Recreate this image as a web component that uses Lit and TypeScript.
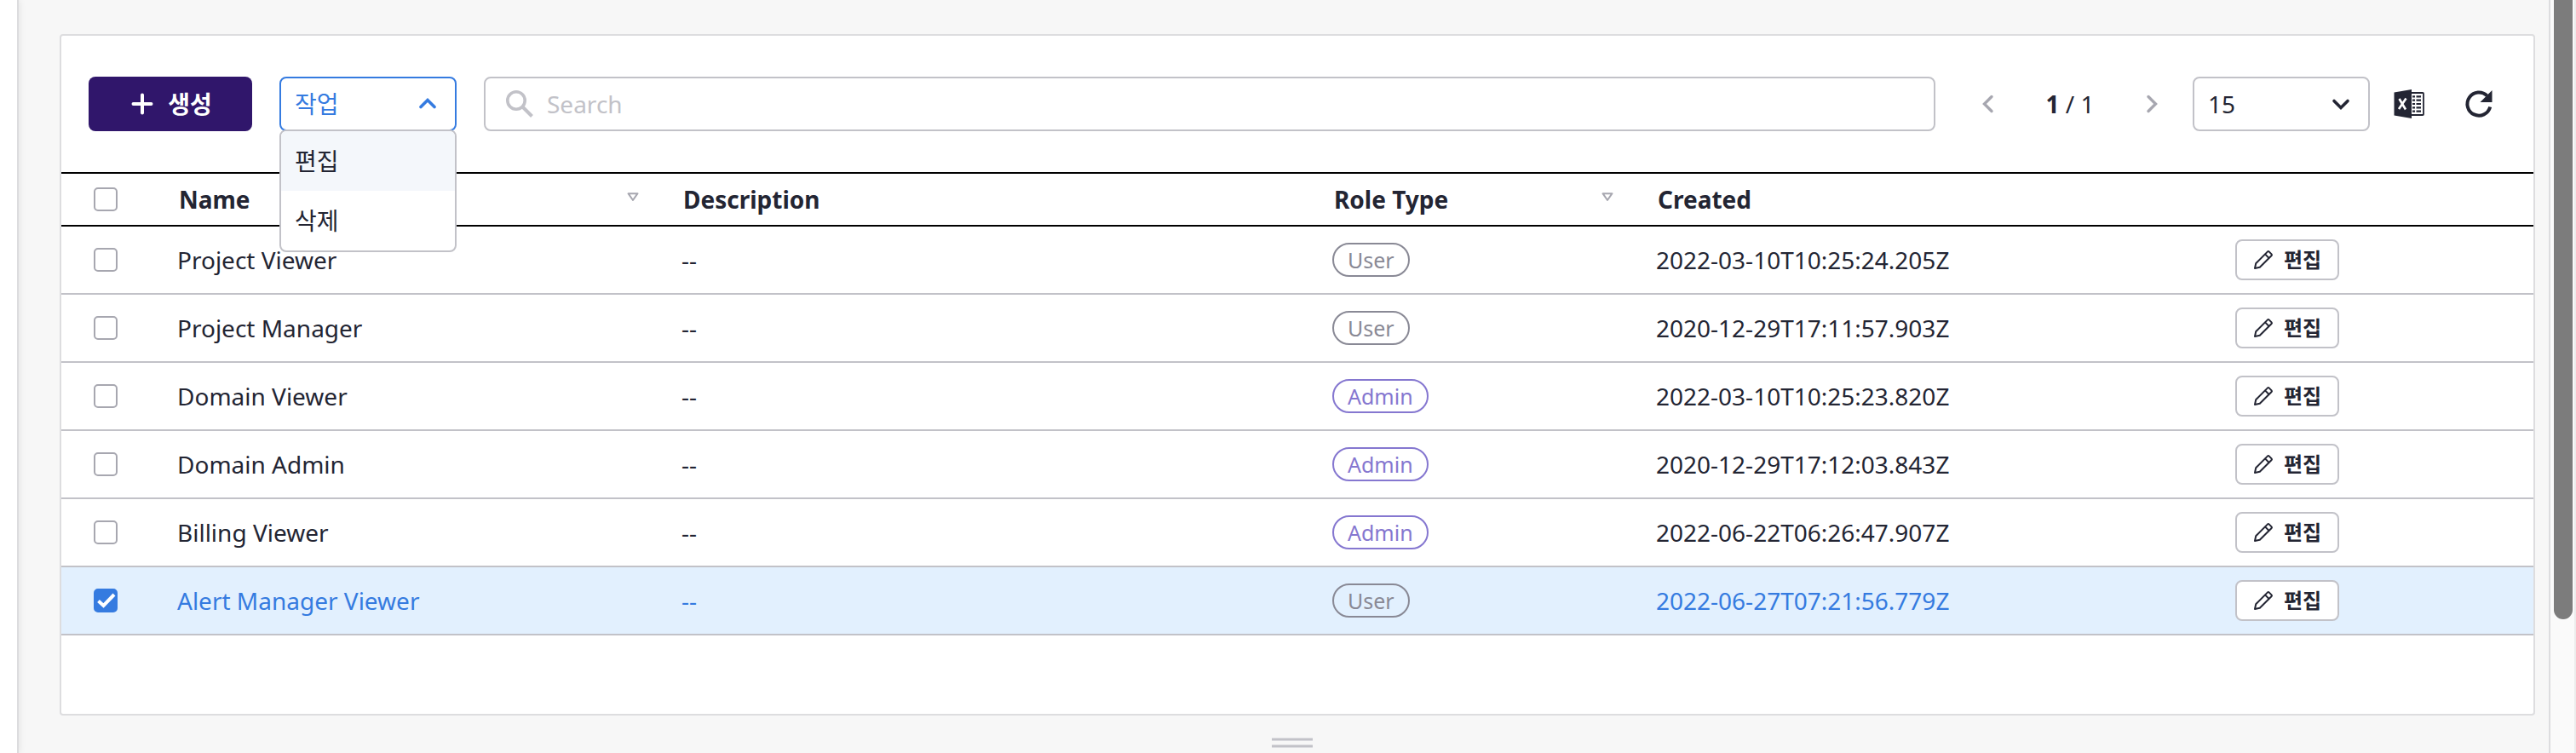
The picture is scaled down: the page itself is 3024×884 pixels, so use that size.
import { LitElement, html, css, svg } from "lit";
import { customElement, state } from "lit/decorators.js";

interface Role {
  name: string;
  type: "User" | "Admin";
  created: string;
}

const ROLES: Role[] = [
  { name: "Project Viewer", type: "User", created: "2022-03-10T10:25:24.205Z" },
  { name: "Project Manager", type: "User", created: "2020-12-29T17:11:57.903Z" },
  { name: "Domain Viewer", type: "Admin", created: "2022-03-10T10:25:23.820Z" },
  { name: "Domain Admin", type: "Admin", created: "2020-12-29T17:12:03.843Z" },
  { name: "Billing Viewer", type: "Admin", created: "2022-06-22T06:26:47.907Z" },
  { name: "Alert Manager Viewer", type: "User", created: "2022-06-27T07:21:56.779Z" },
];

const stroke = (size: number, d: string, width: number, cls = "") => html`
  <svg class="icon ${cls}" width=${size} height=${size} viewBox="0 0 ${size} ${size}" fill="none"
    stroke="currentColor" stroke-width=${width} stroke-linecap="round" stroke-linejoin="miter" aria-hidden="true">
    ${svg`<path d=${d} />`}
  </svg>`;

const plusIcon = stroke(32, "M16 5.500V26.500M5.500 16H26.500", 4);
const upIcon = stroke(24, "M4 15.500L12 7.500L20 15.500", 3.6);
const downIcon = stroke(24, "M4 8.500L12 16.500L20 8.500", 3.6, "over");
const prevIcon = stroke(24, "M16 3.500L7.500 12L16 20.500", 3.4);
const nextIcon = stroke(24, "M8 3.500L16.500 12L8 20.500", 3.4);

const searchIcon = html`
  <svg class="icon" width="36" height="36" viewBox="0 0 36 36" fill="none" stroke="currentColor" aria-hidden="true">
    <circle cx="14" cy="14" r="10.200" stroke-width="3.600" />
    <path d="M21 21L32.500 32.500" stroke-width="4" />
  </svg>`;

const sortIcon = html`
  <svg class="icon" width="14" height="11" viewBox="0 0 14 11" fill="none" stroke="currentColor" aria-hidden="true">
    <path d="M1.500 1.200H12.500L7 9Z" stroke-width="2" stroke-linejoin="round" />
  </svg>`;

const excelIcon = html`
  <svg class="icon" width="36" height="36" viewBox="0 0 36 36" aria-hidden="true">
    <path d="M20 5H34Q35 5 35 6V30Q35 31 34 31H20" fill="none" stroke="currentColor" stroke-width="1.800" />
    <path d="M0.500 4.500L21 1V35L0.500 31.500Z" fill="currentColor" />
    <path d="M22 9.300H25M22 13.700H25M22 18H25M22 22.300H25M22 26.700H25M26.500 9.300H32M26.500 13.700H32M26.500 18H32M26.500 22.300H32M26.500 26.700H32"
      stroke="currentColor" stroke-width="2.200" />
    <path d="M6.500 12L14 24.500M14.500 11.500L6 24" stroke="#fff" stroke-width="2.600" />
  </svg>`;

const refreshIcon = html`
  <svg class="icon" width="36" height="36" viewBox="0 0 36 36" aria-hidden="true">
    <path d="M31.200 21.500A13.600 13.600 0 1 1 27.600 8.400" fill="none" stroke="currentColor" stroke-width="4" />
    <path d="M33.500 2V16H19.500Z" fill="currentColor" />
  </svg>`;

const pencilIcon = html`
  <svg class="icon" width="24" height="24" viewBox="0 0 24 24" fill="none" stroke="currentColor"
    stroke-width="2" stroke-linejoin="round" aria-hidden="true">
    <path d="M2 22L3.200 16.200L17 2.400Q17.800 1.600 18.600 2.400L21.600 5.400Q22.400 6.200 21.600 7L7.800 20.800Z" />
    <path d="M14 5.400L18.600 10" />
  </svg>`;

const checkIcon = html`
  <svg class="check" width="28" height="28" viewBox="0 0 28 28" fill="none" aria-hidden="true">
    <path d="M5.500 14.500L11.500 20L24 7" stroke="#fff" stroke-width="4" />
  </svg>`;

@customElement("app-root")
export class AppRoot extends LitElement {
  @state() private selected = new Set<number>([5]);
  @state() private menuOpen = true;

  static styles = css`
    :host {
      display: flex;
      min-height: 100vh;
      color: #232533;
      background: #f7f7f7;
      font-family: "Noto Sans", "Noto Sans CJK KR", sans-serif;
      font-size: 28px;
      line-height: 40px;
    }
    * { box-sizing: border-box; }
    button, input, select {
      font: inherit;
      color: inherit;
      margin: 0;
      padding: 0;
      border: 0;
      background: none;
    }
    button { cursor: pointer; }
    .icon { display: block; flex: none; }
    .side {
      flex: none;
      width: 22px;
      background: #fff;
      border-right: 2px solid #dcdcde;
      box-shadow: 0 0 8px rgba(0, 0, 0, 0.1);
    }
    .main {
      flex: 1;
      min-width: 0;
      padding: 40px 16px 0 48px;
      display: flex;
      flex-direction: column;
    }
    .card {
      background: #fff;
      border: 2px solid #dddddf;
      border-radius: 4px;
      padding-bottom: 92px;
    }
    .toolbar {
      display: flex;
      align-items: center;
      gap: 32px;
      padding: 48px 46px 48px 32px;
    }
    .create {
      display: flex;
      align-items: center;
      justify-content: center;
      gap: 14px;
      width: 192px;
      height: 64px;
      border-radius: 8px;
      background: #30166b;
      color: #fff;
      font-weight: 700;
    }
    .dropdown { position: relative; width: 208px; flex: none; }
    .trigger {
      display: flex;
      align-items: center;
      justify-content: space-between;
      width: 100%;
      height: 64px;
      padding: 0 20px 0 16px;
      border: 2px solid #357be0;
      border-radius: 8px;
      color: #357be0;
      background: #fff;
    }
    .menu {
      position: absolute;
      top: 100%;
      left: 0;
      right: 0;
      margin: -2px 0 0;
      padding: 0;
      list-style: none;
      background: #fff;
      border: 2px solid #c2c2c8;
      border-radius: 8px;
      overflow: hidden;
      z-index: 2;
    }
    .menu button {
      display: block;
      width: 100%;
      height: 70px;
      padding: 0 16px;
      text-align: left;
    }
    .menu .active { background: #f4f7fb; }
    .search {
      flex: 1;
      display: flex;
      align-items: center;
      gap: 14px;
      height: 64px;
      padding: 0 22px;
      border: 2px solid #c2c2c8;
      border-radius: 8px;
      color: #c2c2c8;
    }
    .search input { flex: 1; min-width: 0; outline: 0; color: #232533; }
    .search input::placeholder { color: #c2c2c8; opacity: 1; }
    .pager {
      display: flex;
      align-items: center;
      justify-content: space-between;
      width: 238px;
      padding: 0 4px 0 18px;
      color: #a7a7b0;
    }
    .pager span { color: #232533; }
    .size { display: grid; align-items: center; width: 208px; }
    .size > * { grid-area: 1 / 1; }
    .size select {
      appearance: none;
      height: 64px;
      padding: 0 16px;
      border: 2px solid #c2c2c8;
      border-radius: 8px;
      background: #fff;
    }
    .over { justify-self: end; margin-right: 22px; pointer-events: none; }
    .tools { display: flex; gap: 46px; margin-left: -4px; }
    table {
      width: 100%;
      table-layout: fixed;
      border-collapse: separate;
      border-spacing: 0;
    }
    .c-check { width: 120px; }
    .c-name { width: 592px; }
    .c-desc { width: 764px; }
    .c-role { width: 380px; }
    .c-created { width: 680px; }
    .c-edit { width: 366px; }
    th, td { text-align: left; padding: 0 16px; white-space: nowrap; vertical-align: middle; }
    th {
      height: 64px;
      padding: 0 34px 0 18px;
      border-top: 2px solid #000;
      border-bottom: 2px solid #000;
      font-weight: 700;
    }
    td { height: 80px; border-bottom: 2px solid #c2c2c8; }
    th:first-child, td:first-child { padding: 0 38px; }
    .head { display: flex; align-items: center; justify-content: space-between; }
    .head .icon { color: #a7a7b0; margin-bottom: 6px; }
    .selected td { background: #e2f0fe; color: #357be0; }
    .box { display: grid; width: 28px; height: 28px; }
    .box > * { grid-area: 1 / 1; }
    .box input {
      appearance: none;
      width: 28px;
      height: 28px;
      border: 2px solid #a7a7b0;
      border-radius: 5px;
      background: #fff;
    }
    .box input:checked { background: #357be0; border-color: #357be0; }
    .check { visibility: hidden; pointer-events: none; }
    .box input:checked + .check { visibility: visible; }
    .badge {
      display: block;
      width: max-content;
      height: 40px;
      padding: 0 16px;
      border: 2px solid #898995;
      border-radius: 20px;
      color: #898995;
      font-size: 25px;
      line-height: 36px;
    }
    .badge.admin { border-color: #8577d0; color: #8577d0; }
    .edit {
      display: flex;
      align-items: center;
      justify-content: center;
      gap: 12px;
      width: 122px;
      height: 48px;
      border: 2px solid #c2c2c8;
      border-radius: 8px;
      background: #fff;
      color: #232533;
      font-weight: 700;
      font-size: 24px;
    }
    .grip { align-self: center; display: grid; gap: 4px; margin: 26px 12px 0 0; }
    .grip i { width: 48px; height: 4px; background: #c2c2c8; border: solid #dcdce0; border-width: 1px 0; }
    .track {
      flex: none;
      width: 32px;
      padding: 0 2px 0 4px;
      background: #fafafa;
      border-left: 2px solid #dddddf;
      border-right: 2px solid #ececec;
    }
    .thumb { height: 727px; border-radius: 0 0 11px 11px; background: #7c7c7c; }
  `;

  private toggle(i: number) {
    const next = new Set(this.selected);
    if (next.has(i)) next.delete(i);
    else next.add(i);
    this.selected = next;
  }

  private toggleAll(e: Event) {
    const on = (e.target as HTMLInputElement).checked;
    this.selected = new Set(on ? ROLES.map((_, i) => i) : []);
  }

  private renderRow(role: Role, i: number) {
    const on = this.selected.has(i);
    return html`
      <tr class=${on ? "selected" : ""}>
        <td>
          <label class="box">
            <input type="checkbox" aria-label=${role.name} .checked=${on} @change=${() => this.toggle(i)} />
            ${checkIcon}
          </label>
        </td>
        <td>${role.name}</td>
        <td>--</td>
        <td><span class="badge ${role.type.toLowerCase()}">${role.type}</span></td>
        <td>${role.created}</td>
        <td><button class="edit">${pencilIcon}<span>편집</span></button></td>
      </tr>`;
  }

  render() {
    return html`
      <div class="side"></div>
      <main class="main">
        <section class="card">
          <div class="toolbar">
            <button class="create">${plusIcon}<span>생성</span></button>
            <div class="dropdown">
              <button class="trigger" aria-haspopup="true" aria-expanded=${this.menuOpen}
                @click=${() => (this.menuOpen = !this.menuOpen)}>
                <span>작업</span>${upIcon}
              </button>
              ${this.menuOpen
                ? html`<ul class="menu">
                    <li><button class="active">편집</button></li>
                    <li><button>삭제</button></li>
                  </ul>`
                : ""}
            </div>
            <label class="search">
              ${searchIcon}
              <input type="text" placeholder="Search" aria-label="Search" />
            </label>
            <nav class="pager">
              <button aria-label="Previous page">${prevIcon}</button>
              <span><b>1</b> / 1</span>
              <button aria-label="Next page">${nextIcon}</button>
            </nav>
            <label class="size">
              <select aria-label="Page size"><option>15</option><option>30</option><option>45</option></select>
              ${downIcon}
            </label>
            <div class="tools">
              <button aria-label="Export to Excel">${excelIcon}</button>
              <button aria-label="Refresh">${refreshIcon}</button>
            </div>
          </div>
          <table>
            <colgroup>
              <col class="c-check" /><col class="c-name" /><col class="c-desc" />
              <col class="c-role" /><col class="c-created" /><col class="c-edit" />
            </colgroup>
            <thead>
              <tr>
                <th>
                  <label class="box">
                    <input type="checkbox" aria-label="Select all" @change=${this.toggleAll} />
                    ${checkIcon}
                  </label>
                </th>
                <th><div class="head">Name ${sortIcon}</div></th>
                <th>Description</th>
                <th><div class="head">Role Type ${sortIcon}</div></th>
                <th>Created</th>
                <th></th>
              </tr>
            </thead>
            <tbody>${ROLES.map((r, i) => this.renderRow(r, i))}</tbody>
          </table>
        </section>
        <div class="grip"><i></i><i></i></div>
      </main>
      <div class="track"><div class="thumb"></div></div>
    `;
  }
}
